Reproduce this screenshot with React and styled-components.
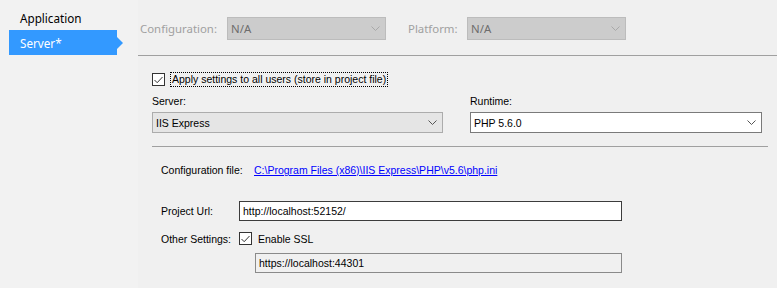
import styled, { createGlobalStyle } from 'styled-components'

const GlobalStyle = createGlobalStyle`
  html, body {
    margin: 0;
    padding: 0;
    background: #f0f0f0;
  }
`

const Window = styled.div`
  width: 777px;
  height: 288px;
  display: flex;
  overflow: hidden;
  background: #f0f0f0;
  font-family: 'Liberation Sans', Arial, sans-serif;
  font-size: 10.5px;
  color: #000;
`

const Sidebar = styled.nav`
  width: 138px;
  flex-shrink: 0;
  box-sizing: border-box;
  padding: 5px 0 0 9px;
  background: #f2f2f2;
  font-family: 'Noto Sans', sans-serif;
  font-size: 11.7px;
`

const NavItem = styled.div`
  position: relative;
  width: 108px;
  height: 25px;
  box-sizing: border-box;
  padding-left: 11px;
  display: flex;
  align-items: center;
  background: ${p => (p.$active ? '#3399ff' : 'transparent')};
  color: ${p => (p.$active ? '#fff' : '#000')};

  ${p =>
    p.$active &&
    `
    &::after {
      content: '';
      position: absolute;
      left: 100%;
      top: 50%;
      margin-top: -6px;
      border-left: 6px solid #3399ff;
      border-top: 6px solid transparent;
      border-bottom: 6px solid transparent;
    }
  `}
`

const Main = styled.main`
  flex: 1;
  display: flex;
  flex-direction: column;
`

const TopBar = styled.div`
  height: 56px;
  box-sizing: border-box;
  padding: 17px 0 0 2px;
  border-bottom: 1px solid #a0a0a0;
  display: flex;
  align-items: flex-start;
  font-family: 'Noto Sans', sans-serif;
  font-size: 11.4px;
`

const TopLabel = styled.span`
  width: ${p => p.$width}px;
  margin-left: ${p => p.$offset || 0}px;
  height: 23px;
  line-height: 23px;
  color: #a0a0a0;
`

const Select = styled.div`
  width: ${p => p.$width}px;
  height: ${p => p.$height || 21}px;
  box-sizing: border-box;
  padding: 0 5px 0 3px;
  display: flex;
  align-items: center;
  justify-content: space-between;
  border: 1px solid ${p => (p.$variant === 'disabled' ? '#bcbcbc' : p.$variant === 'white' ? '#7a7a7a' : '#acacac')};
  background: ${p => (p.$variant === 'disabled' ? '#cccccc' : p.$variant === 'white' ? '#ffffff' : '#e5e5e5')};
  color: ${p => (p.$variant === 'disabled' ? '#6d6d6d' : '#000')};
`

const Chevron = ({ color }) => (
  <svg width="9" height="5" viewBox="0 0 9 5">
    <polyline points="0.5,0.5 4.5,4.5 8.5,0.5" fill="none" stroke={color} strokeWidth="1" />
  </svg>
)

const Body = styled.div`
  padding: 16px 9px 0 14px;
  display: flex;
  flex-direction: column;
`

const CheckRow = styled.div`
  display: flex;
  align-items: center;
  height: 15px;
`

const Box = styled.span`
  width: 13px;
  height: 13px;
  box-sizing: border-box;
  border: 1px solid #333;
  background: #fff;
  display: flex;
  align-items: center;
  justify-content: center;
  flex-shrink: 0;
  margin-right: ${p => p.$gap}px;
`

const CheckBox = ({ gap = 5 }) => (
  <Box $gap={gap}>
    <svg width="9" height="8" viewBox="0 0 9 8">
      <polyline points="0.5,4 3.2,6.7 8.5,1" fill="none" stroke="#333" strokeWidth="1" />
    </svg>
  </Box>
)

const FocusLabel = styled.span`
  border: 1px dotted #000;
  padding: 0 1px;
  line-height: 13px;
`

const DropGrid = styled.div`
  margin-top: 8px;
  display: grid;
  grid-template-columns: 291px 292px;
  column-gap: 27px;
`

const Field = styled.div`
  display: flex;
  flex-direction: column;
`

const FieldLabel = styled.span`
  line-height: 13px;
  margin-bottom: 4px;
`

const Separator = styled.hr`
  margin: 13px 0 0;
  border: none;
  border-top: 1px solid #a0a0a0;
  height: 0;
`

const Form = styled.div`
  padding-left: 9px;
  display: flex;
  flex-direction: column;
`

const FileRow = styled.div`
  margin-top: 17px;
  display: flex;
  line-height: 13px;
`

const RowLabel = styled.span`
  width: ${p => p.$width}px;
  flex-shrink: 0;
`

const Link = styled.a`
  color: #0000ff;
  text-decoration: underline;
`

const FormRow = styled.div`
  display: flex;
  align-items: center;
  margin-top: ${p => p.$top}px;
  padding-left: ${p => p.$indent || 0}px;
`

const TextInput = styled.div`
  width: ${p => p.$width}px;
  height: 20px;
  box-sizing: border-box;
  padding-left: 3px;
  display: flex;
  align-items: center;
  border: 1px solid ${p => (p.$muted ? '#8a8a8a' : '#3c3c3c')};
  background: ${p => (p.$muted ? '#f0f0f0' : '#fff')};
`

export default function App() {
  return (
    <>
      <GlobalStyle />
      <Window>
        <Sidebar>
          <NavItem>Application</NavItem>
          <NavItem $active>Server*</NavItem>
        </Sidebar>
        <Main>
          <TopBar>
            <TopLabel $width={87}>Configuration:</TopLabel>
            <Select $width={159} $height={23} $variant="disabled">
              N/A
              <Chevron color="#a8a8a8" />
            </Select>
            <TopLabel $width={59} $offset={22}>Platform:</TopLabel>
            <Select $width={159} $height={23} $variant="disabled">
              N/A
              <Chevron color="#a8a8a8" />
            </Select>
          </TopBar>
          <Body>
            <CheckRow>
              <CheckBox gap={5} />
              <FocusLabel>Apply settings to all users (store in project file)</FocusLabel>
            </CheckRow>
            <DropGrid>
              <Field>
                <FieldLabel>Server:</FieldLabel>
                <Select $width={291}>
                  IIS Express
                  <Chevron color="#555" />
                </Select>
              </Field>
              <Field>
                <FieldLabel>Runtime:</FieldLabel>
                <Select $width={292} $variant="white">
                  PHP 5.6.0
                  <Chevron color="#555" />
                </Select>
              </Field>
            </DropGrid>
            <Separator />
            <Form>
              <FileRow>
                <RowLabel $width={93}>Configuration file:</RowLabel>
                <Link href="#">C:\Program Files (x86)\IIS Express\PHP\v5.6\php.ini</Link>
              </FileRow>
              <FormRow $top={24}>
                <RowLabel $width={78}>Project Url:</RowLabel>
                <TextInput $width={383}>http://localhost:52152/</TextInput>
              </FormRow>
              <FormRow $top={11}>
                <RowLabel $width={78}>Other Settings:</RowLabel>
                <CheckBox gap={6} />
                <span>Enable SSL</span>
              </FormRow>
              <FormRow $top={8} $indent={94}>
                <TextInput $width={367} $muted>https://localhost:44301</TextInput>
              </FormRow>
            </Form>
          </Body>
        </Main>
      </Window>
    </>
  )
}
